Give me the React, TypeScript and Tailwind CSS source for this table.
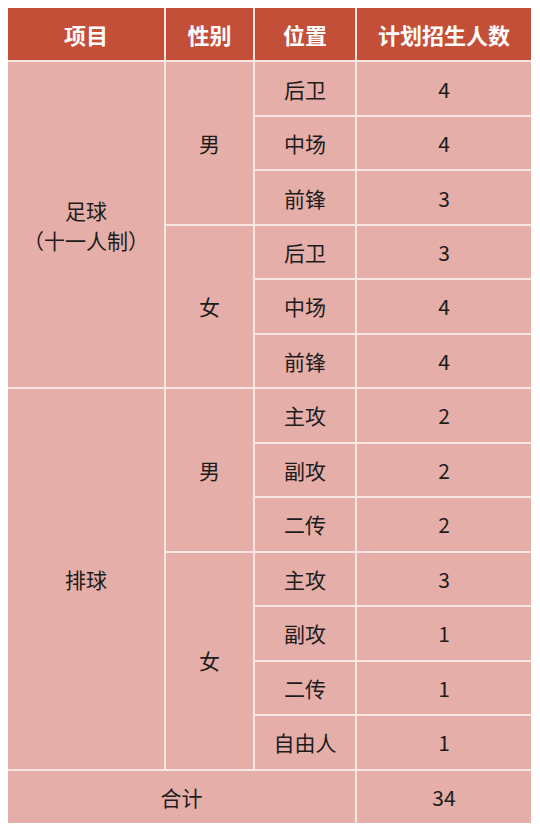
import { Fragment } from 'react';

const cell = 'bg-[#e6aea8] flex items-center justify-center text-[21px] text-[#1c1c1c] leading-tight text-center';
const head = 'bg-[#c44f39] flex items-center justify-center text-[22px] font-bold text-white';

type Row = { pos: string; n: number };

const football = {
  male: [{ pos: '后卫', n: 4 }, { pos: '中场', n: 4 }, { pos: '前锋', n: 3 }] as Row[],
  female: [{ pos: '后卫', n: 3 }, { pos: '中场', n: 4 }, { pos: '前锋', n: 4 }] as Row[],
};

const volleyball = {
  male: [{ pos: '主攻', n: 2 }, { pos: '副攻', n: 2 }, { pos: '二传', n: 2 }] as Row[],
  female: [{ pos: '主攻', n: 3 }, { pos: '副攻', n: 1 }, { pos: '二传', n: 1 }, { pos: '自由人', n: 1 }] as Row[],
};

function Positions({ rows }: { rows: Row[] }) {
  return (
    <>
      {rows.map((r, i) => (
        <Fragment key={i}>
          <div className={cell}>{r.pos}</div>
          <div className={cell}>{r.n}</div>
        </Fragment>
      ))}
    </>
  );
}

export default function App() {
  return (
    <div
      className="w-[540px] h-[833px] bg-white pt-[8px] pl-[8px]"
      style={{ fontFamily: '"Noto Sans CJK SC", "Noto Sans", sans-serif' }}
    >
      <div className="w-[523px] h-[815px] bg-[#f7e6e2] grid grid-cols-[156px_87px_100px_174px] grid-rows-[repeat(15,1fr)] gap-[2px]">
        <div className={head}>项目</div>
        <div className={head}>性别</div>
        <div className={head}>位置</div>
        <div className={head}>计划招生人数</div>

        {/* 足球 */}
        <div className={`${cell} row-span-6`}>
          <div className="leading-[30px]">
            <div>足球</div>
            <div>（十一人制）</div>
          </div>
        </div>
        <div className={`${cell} row-span-3`}>男</div>
        <Positions rows={football.male} />
        <div className={`${cell} row-span-3`}>女</div>
        <Positions rows={football.female} />

        {/* 排球 */}
        <div className={`${cell} row-span-7`}>排球</div>
        <div className={`${cell} row-span-3`}>男</div>
        <Positions rows={volleyball.male} />
        <div className={`${cell} row-span-4`}>女</div>
        <Positions rows={volleyball.female} />

        <div className={`${cell} col-span-3`}>合计</div>
        <div className={cell}>34</div>
      </div>
    </div>
  );
}
